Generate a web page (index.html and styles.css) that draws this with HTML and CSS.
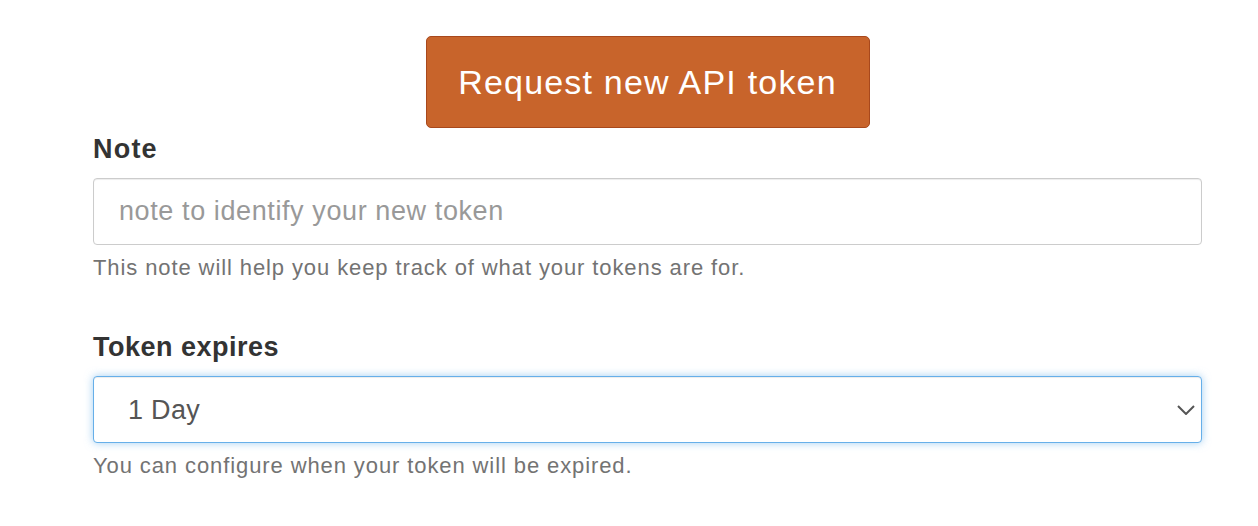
FILE: index.html
```html
<!DOCTYPE html>
<html>
<head>
<meta charset="utf-8">
<link rel="stylesheet" href="styles.css">
</head>
<body>
<div class="page">
  <div class="actions">
    <button class="btn-request" type="button">Request new API token</button>
  </div>
  <div class="field">
    <label class="label" for="note">Note</label>
    <input id="note" class="input" type="text" placeholder="note to identify your new token">
    <p class="help">This note will help you keep track of what your tokens are for.</p>
  </div>
  <div class="field field-expires">
    <label class="label label-expires" for="expires">Token expires</label>
    <div class="select-wrap">
      <select id="expires" class="input select">
        <option>1 Day</option>
        <option>7 Days</option>
        <option>30 Days</option>
      </select>
      <svg class="chevron" width="18" height="10" viewBox="0 0 18 10"><path d="M1 1 L9 9 L17 1" fill="none" stroke="#555" stroke-width="2"/></svg>
    </div>
    <p class="help">You can configure when your token will be expired.</p>
  </div>
</div>
</body>
</html>
```
FILE: styles.css
```css
html, body {
  margin: 0;
  padding: 0;
  background: #fff;
}
body {
  font-family: "Liberation Sans", Arial, sans-serif;
  color: #333;
}
.page {
  padding: 36px 56px 0 93px;
}
.actions {
  display: flex;
  justify-content: center;
}
.btn-request {
  width: 444px;
  height: 92px;
  background: #c8642b;
  border: 1px solid #a8481c;
  border-radius: 5px;
  color: #fff;
  font-family: "Liberation Sans", Arial, sans-serif;
  font-size: 34px;
  letter-spacing: 1.2px;
  padding: 0;
  cursor: pointer;
}
.field {
  display: flex;
  flex-direction: column;
}
.label {
  font-weight: bold;
  font-size: 27px;
  line-height: 30px;
  letter-spacing: 1.2px;
  margin-top: 6px;
  margin-bottom: 14px;
  color: #333;
}
.label-expires {
  letter-spacing: 0.5px;
}
.input {
  box-sizing: border-box;
  width: 100%;
  height: 67px;
  border: 1px solid #ccc;
  border-radius: 4px;
  padding: 0 25px;
  font-family: "Liberation Sans", Arial, sans-serif;
  font-size: 27px;
  letter-spacing: 0.6px;
  color: #555;
  background: #fff;
  box-shadow: inset 0 1px 1px rgba(0,0,0,.075);
  outline: none;
}
.input::placeholder {
  color: #999;
}
.help {
  margin: 9px 0 0;
  font-size: 22px;
  line-height: 28px;
  letter-spacing: 0.9px;
  color: #737373;
}
.field-expires {
  margin-top: 44px;
}
.select-wrap {
  position: relative;
}
.select {
  appearance: none;
  -webkit-appearance: none;
  padding-left: 34px;
  letter-spacing: 0.3px;
  border-color: #66afe9;
  box-shadow: inset 0 1px 1px rgba(0,0,0,.075), 0 0 8px rgba(102,175,233,.6);
}
.chevron {
  position: absolute;
  right: 7px;
  top: 29px;
  pointer-events: none;
}
```
